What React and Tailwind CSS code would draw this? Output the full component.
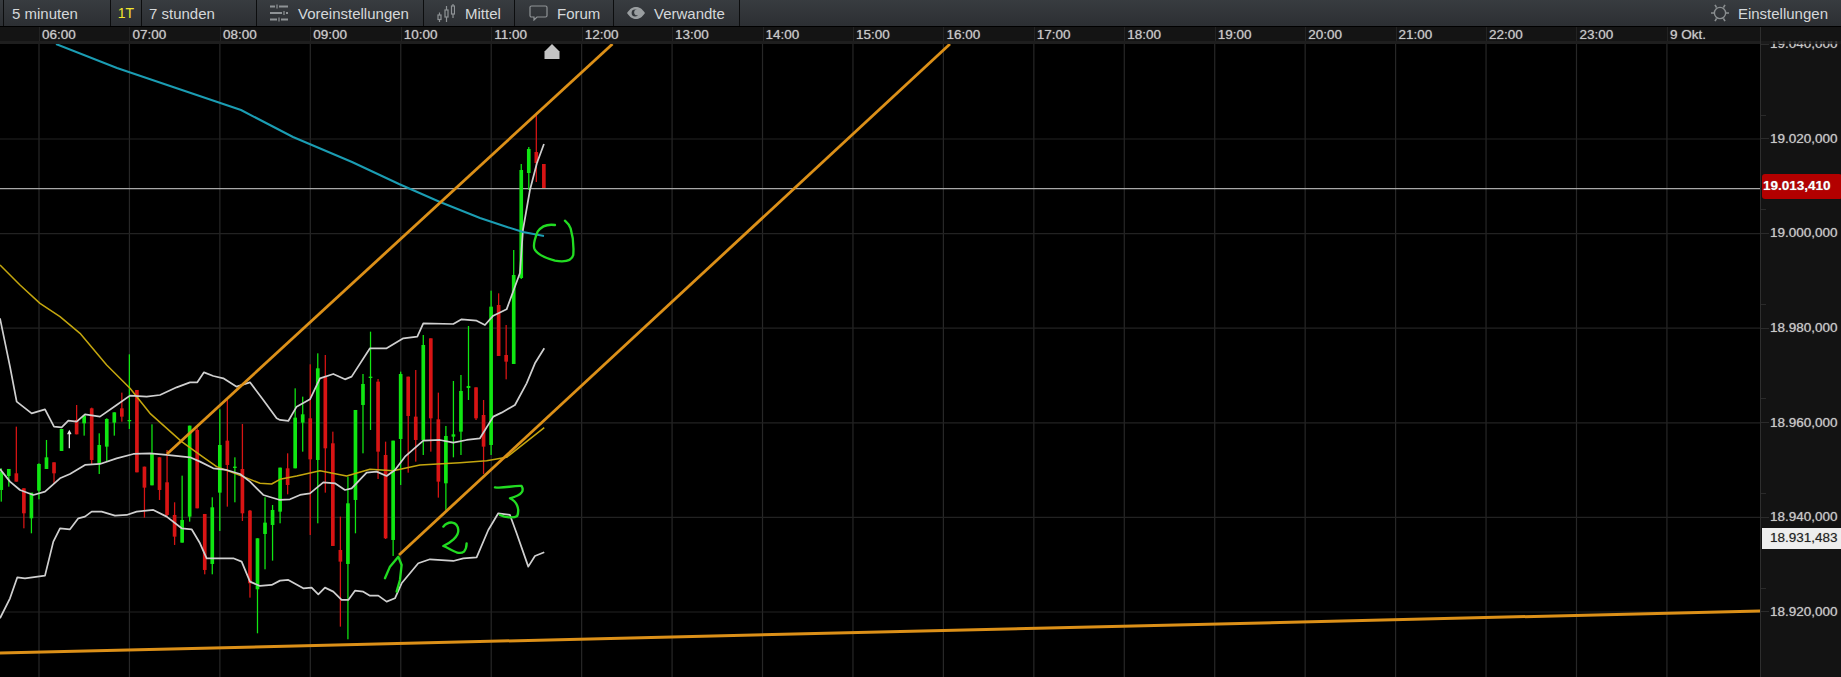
const timeLabels = ["06:00","07:00","08:00","09:00","10:00","11:00","12:00","13:00","14:00","15:00","16:00","17:00","18:00","19:00","20:00","21:00","22:00","23:00","9 Okt."];
const priceLabels = ["19.040,000","19.020,000","19.000,000","18.980,000","18.960,000","18.940,000","18.920,000"];
const gridX = timeLabels.map((_, i) => 39 + i * 90.44);
const gridY = [139, 233.6, 328.2, 422.8, 517.4, 612];

// [wick top, wick bottom, body top, body bottom, up?] measured on a 3x crop starting at y=250
const candles = [
  [655,755,665,720,1],[657,710,657,678,1],[530,695,670,695,0],[715,835,715,790,0],[730,850,728,805,1],
  [640,748,642,722,1],[570,657,622,657,1],[637,700,637,670,0],[537,603,537,603,1],null,
  [465,553,510,553,0],[495,557,497,520,1],[473,645,475,630,0],[550,672,585,640,1],[505,635,507,590,1],
  [487,557,487,518,1],[428,515,475,500,0],[313,537,510,514,1],[420,667,420,667,0],[650,803,650,713,0],
  [523,706,610,706,1],[622,750,622,720,0],[600,800,697,795,0],[757,885,795,860,0],[677,878,810,878,1],
  [527,815,527,800,1],[535,775,540,775,0],[792,973,792,960,0],[742,973,772,942,1],[478,843,585,728,1],
  [450,770,572,645,0],[622,757,650,654,1],[522,813,657,790,0],[780,1043,782,1000,0],[865,1150,865,1018,1],
  [742,958,818,852,1],[765,932,780,825,1],[653,820,653,785,1],[610,733,655,705,0],[415,655,503,655,1],
  [440,605,493,518,1],[343,855,505,628,0],[310,820,355,630,1],[315,728,380,595,0],[545,888,580,888,0],
  [800,1130,900,935,0],[680,1168,760,942,1],[480,850,480,750,1],[372,610,402,465,1],[245,540,380,384,1],
  [387,687,395,605,0],[575,867,615,865,0],[572,918,572,870,1],[365,705,372,567,1],[380,668,380,498,0],
  [360,635,500,570,0],[255,615,285,570,1],[265,605,265,505,0],[428,743,508,695,0],[528,780,558,700,1],
  [393,622,553,560,1],[375,615,423,545,1],[228,450,408,414,1],[412,510,412,505,0],[450,672,495,590,0],
  [122,615,170,585,1],[130,318,165,318,0],[225,388,315,335,0],[0,342,75,342,1],[-258,87,-240,84,1],
  [-309,-180,-303,-231,1],[-405,-204,-294,-261,0],[-258,-186,-258,-186,0],
];

const shift = (pts, dx = 0) => pts.map(([x, y]) => `${x + dx},${y}`).join(" ");

const yellowLine = shift([[0,45],[60,105],[120,160],[180,200],[240,250],[320,345],[390,415],[450,490],[545,575],[600,615],[650,650],[730,680],[780,700],[815,702],[840,688]]) + " " +
  shift([[50,678],[120,662],[200,678],[270,658],[340,662],[420,645],[540,638],[620,632],[680,622],[793,533]], 840);
const upperBand = shift([[0,205],[30,350],[50,455],[95,490],[135,478],[162,530],[185,532],[205,512],[230,515],[255,493],[300,500],[350,465],[390,437],[440,440],[480,435],[530,412],[570,397],[592,397],[612,367],[640,378],[670,385],[710,410],[750,397],[790,450],[830,505]]) + " " +
  shift([[0,510],[25,513],[50,470],[90,448],[120,385],[160,372],[195,388],[215,380],[270,295],[320,295],[370,265],[412,260],[430,220],[520,222],[545,208],[590,212],[615,225],[640,197],[680,178],[720,69],[729,-60],[750,-180],[771,-261],[792,-318]], 840);
const middleBand = shift([[0,657],[30,695],[60,720],[100,735],[135,725],[180,685],[210,672],[255,645],[300,642],[350,625],[400,612],[450,610],[500,615],[570,622],[600,635],[640,655],[680,660],[720,672],[750,695],[790,735],[840,750]]) + " " +
  shift([[30,748],[60,735],[90,730],[130,697],[165,700],[195,720],[215,715],[260,668],[290,665],[320,678],[345,660],[375,620],[430,572],[480,570],[520,578],[560,570],[600,565],[640,500],[665,488],[705,465],[740,400],[765,340],[793,295]], 840);
const lowerBand = shift([[0,1105],[30,1045],[52,982],[75,985],[135,977],[160,875],[180,835],[210,838],[235,805],[255,800],[275,785],[305,785],[345,797],[380,795],[410,785],[460,780],[500,800],[545,835],[575,838],[600,880],[620,925],[700,925],[725,935],[750,995],[780,1008],[815,1005],[840,992]]) + " " +
  shift([[25,990],[70,1015],[95,1013],[115,1033],[135,1013],[160,1025],[185,1050],[205,1050],[225,1022],[250,1025],[270,1037],[295,1037],[320,1055],[345,1045],[365,1000],[415,940],[450,928],[520,933],[550,925],[590,922],[625,840],[655,790],[690,795],[710,850],[745,950],[765,918],[793,907]], 840);

const handOne = "1155,985 1170,950 1195,920 1205,945 1200,990 1190,1025";
const handTwo = "M1330 830C1345 812 1372 812 1375 840C1377 860 1350 880 1330 888C1350 895 1375 918 1392 905C1398 898 1400 890 1400 880";
const handThree = "M1485 712C1510 716 1540 706 1565 708C1572 720 1570 735 1530 745C1550 755 1560 775 1552 798C1540 806 1515 802 1500 795";
const handCircle = "M1665 -75C1645 -78 1625 -72 1613 -55C1605 -35 1600 -15 1603 -5C1610 15 1640 25 1665 32C1690 36 1715 35 1720 15C1722 -15 1718 -45 1712 -65C1708 -75 1702 -82 1695 -88";

const SlidersIcon = () => (
  <svg width="18" height="18" viewBox="0 0 18 18" stroke="#8f9396" strokeWidth="2" fill="none">
    <path d="M0 2.5H5M9 2.5H18M0 9H12M16 9H18M0 15.5H7M11 15.5H18" />
    <path d="M7 0.5V4.5M14 7V11M9 13.5V17.5" strokeWidth="1.2" />
  </svg>
);

const CandlesIcon = () => (
  <svg width="18" height="20" viewBox="0 0 18 20" stroke="#8f9396" strokeWidth="1.2" fill="none">
    <path d="M2.5 9.5V19M9.5 3V19M16 1V15" />
    <rect x="1" y="12" width="3" height="4.5" fill="#33373b" />
    <rect x="8" y="7" width="3" height="7" fill="#33373b" />
    <rect x="14.5" y="3" width="3" height="8" fill="#33373b" />
  </svg>
);

const BubbleIcon = () => (
  <svg width="19" height="16" viewBox="0 0 19 16" stroke="#8f9396" strokeWidth="1.2" fill="none">
    <path d="M2.5 1H16.5C17.4 1 18 1.6 18 2.5V10.5C18 11.4 17.4 12 16.5 12H8L5 15V12H2.5C1.6 12 1 11.4 1 10.5V2.5C1 1.6 1.6 1 2.5 1Z" />
  </svg>
);

const EyeIcon = () => (
  <svg width="18" height="12" viewBox="0 0 18 12">
    <path d="M0 6C3 1.5 6 0 9 0C12 0 15 1.5 18 6C15 10.5 12 12 9 12C6 12 3 10.5 0 6Z" fill="#9a9ea0" />
    <circle cx="8" cy="6" r="3.4" fill="#33373b" />
    <circle cx="10" cy="5.4" r="2.8" fill="#9a9ea0" />
  </svg>
);

const SunIcon = () => (
  <svg width="18" height="18" viewBox="0 0 18 18" stroke="#8a8e90" fill="none">
    <circle cx="9" cy="9" r="5.6" strokeWidth="1.4" />
    <path d="M0 9H3.2M14.8 9H18M4 0.8L5.6 3.6M14 0.8L12.4 3.6M4 17.2L5.6 14.4M14 17.2L12.4 14.4" strokeWidth="1.6" />
  </svg>
);

const ToolbarItem = ({ className, icon, children }) => (
  <div className={`flex items-center h-full shrink-0 border-r border-[#0c0d0e] ${className}`}>
    {icon}
    {children}
  </div>
);

const Toolbar = () => (
  <div className="flex items-center h-[27px] shrink-0 border-b border-black bg-gradient-to-b from-[#383c40] to-[#2c2f33] text-[15px] leading-none text-[#d5d8da]">
    <ToolbarItem className="w-[4px]" />
    <ToolbarItem className="w-[107px] pl-[8px]">5 minuten</ToolbarItem>
    <ToolbarItem className="w-[31px] justify-center text-[14px] text-[#f2e62e]">1T</ToolbarItem>
    <ToolbarItem className="w-[115px] pl-[7px]">7 stunden</ToolbarItem>
    <ToolbarItem className="w-[167px] pl-[13px] gap-[10px]" icon={<SlidersIcon />}>Voreinstellungen</ToolbarItem>
    <ToolbarItem className="w-[91px] pl-[13px] gap-[10px]" icon={<CandlesIcon />}>Mittel</ToolbarItem>
    <ToolbarItem className="w-[99px] pl-[14px] gap-[9px]" icon={<BubbleIcon />}>Forum</ToolbarItem>
    <ToolbarItem className="w-[126px] pl-[13px] gap-[9px]" icon={<EyeIcon />}>Verwandte</ToolbarItem>
    <div className="flex-1" />
    <div className="flex items-center gap-[9px] pr-[13px]">
      <SunIcon />
      Einstellungen
    </div>
  </div>
);

const TimeAxis = () => (
  <div className="shrink-0 bg-[#141414]">
    <div className="flex h-[14px] pl-[39px] text-[13.5px] leading-[15px] text-[#c8c8c8] [text-shadow:0_0_1px_#9a9a9a]">
      {timeLabels.map((label) => (
        <div key={label} className="w-[90.44px] shrink-0 border-l border-[#232323] pl-[2px]">
          {label}
        </div>
      ))}
    </div>
    <div className="h-[3px] bg-[#1e1e1e]" />
  </div>
);

const Chart = () => (
  <svg className="block flex-1 min-h-0 w-full" viewBox="0 44 1760 633" fill="none">
    {gridX.map((x) => (
      <line key={x} x1={x} x2={x} y1="44" y2="677" stroke="#272727" strokeWidth="1.2" />
    ))}
    {gridY.map((y) => (
      <line key={y} x1="0" x2="1760" y1={y} y2={y} stroke="#222222" strokeWidth="1.2" />
    ))}
    <line x1="0" x2="1760" y1="188.7" y2="188.7" stroke="#a8a8a8" strokeWidth="1.3" />

    <g transform="translate(0 250) scale(0.3333)">
      {candles.map((c, i) => {
        if (!c) return null;
        const x = 3.8 + 22.61 * i;
        const color = c[4] ? "#10e612" : "#d81414";
        return (
          <g key={i} fill={color}>
            <rect x={x - 1.9} y={c[0]} width="3.8" height={c[1] - c[0]} />
            <rect x={x - 5.5} y={c[2]} width="11" height={c[3] - c[2]} />
          </g>
        );
      })}
      <path d="M208 595V545M203 553L208 543L213 553" stroke="#f2f2f2" strokeWidth="3.6" />
      <polyline points={yellowLine} stroke="#c4a60e" strokeWidth="4.6" strokeLinejoin="round" />
      <g stroke="#cfcfcf" strokeWidth="5.2" strokeLinejoin="round">
        <polyline points={upperBand} />
        <polyline points={middleBand} />
        <polyline points={lowerBand} />
      </g>
    </g>

    <polyline
      points="56,44 117,68 176,88 241,110 293,137 352,162 399,184 440,202 460,210 480,218 507,227 523,232 544,236"
      stroke="#1b9db3"
      strokeWidth="2"
      strokeLinejoin="round"
    />
    <g stroke="#dc9018" strokeWidth="2.8">
      <line x1="167" y1="454" x2="612.5" y2="44" />
      <line x1="399" y1="555" x2="950" y2="44" />
      <line x1="0" y1="653" x2="1760" y2="611" strokeWidth="3" />
    </g>

    <g transform="translate(0 250) scale(0.3333)" stroke="#22dc22" strokeWidth="7" strokeLinecap="round" strokeLinejoin="round">
      <polyline points={handOne} />
      <path d={handTwo} />
      <path d={handThree} />
      <path d={handCircle} />
    </g>

    <path d="M544.5 59V51.5L552 44L559.5 51.5V59Z" fill="#c4c4c4" />
  </svg>
);

const PriceAxis = () => (
  <div className="relative w-[81px] shrink-0 overflow-hidden border-l border-[#2e2e2e] bg-[#131313] text-[13.5px] text-[#c8c8c8] [text-shadow:0_0_1px_#9a9a9a]">
    <div className="-mt-[30px]">
      {priceLabels.map((label) => (
        <div key={label} className="relative flex items-center h-[94.6px]">
          <span className="absolute left-0 top-[23px] w-[5px] h-px bg-[#2a2a2a]" />
          <span className="w-[8px] h-px bg-[#2b2b2b] mr-[1px]" />
          {label}
        </div>
      ))}
    </div>
    <div className="absolute left-0 right-0 top-0 h-[14px] bg-[#141414]" />
    <div className="absolute left-0 right-0 top-[14px] h-[3px] bg-[#1e1e1e]/80" />
    <div className="absolute left-[1px] top-[147px] flex items-center pl-[1px] w-[80px] h-[25px] rounded-[3px] bg-[#b30000] text-[13.5px] font-bold text-white">
      19.013,410
    </div>
    <div className="absolute left-[1px] top-[501px] flex items-center pl-[8px] w-[80px] h-[21px] bg-[#eeeeee] text-[#222222]">
      18.931,483
    </div>
  </div>
);

export default function App() {
  return (
    <div className="flex flex-col w-[1841px] h-[677px] overflow-hidden bg-black font-['Liberation_Sans',Arial,sans-serif]">
      <Toolbar />
      <div className="flex flex-1 min-h-0">
        <div className="flex flex-col w-[1760px] shrink-0">
          <TimeAxis />
          <Chart />
        </div>
        <PriceAxis />
      </div>
    </div>
  );
}
